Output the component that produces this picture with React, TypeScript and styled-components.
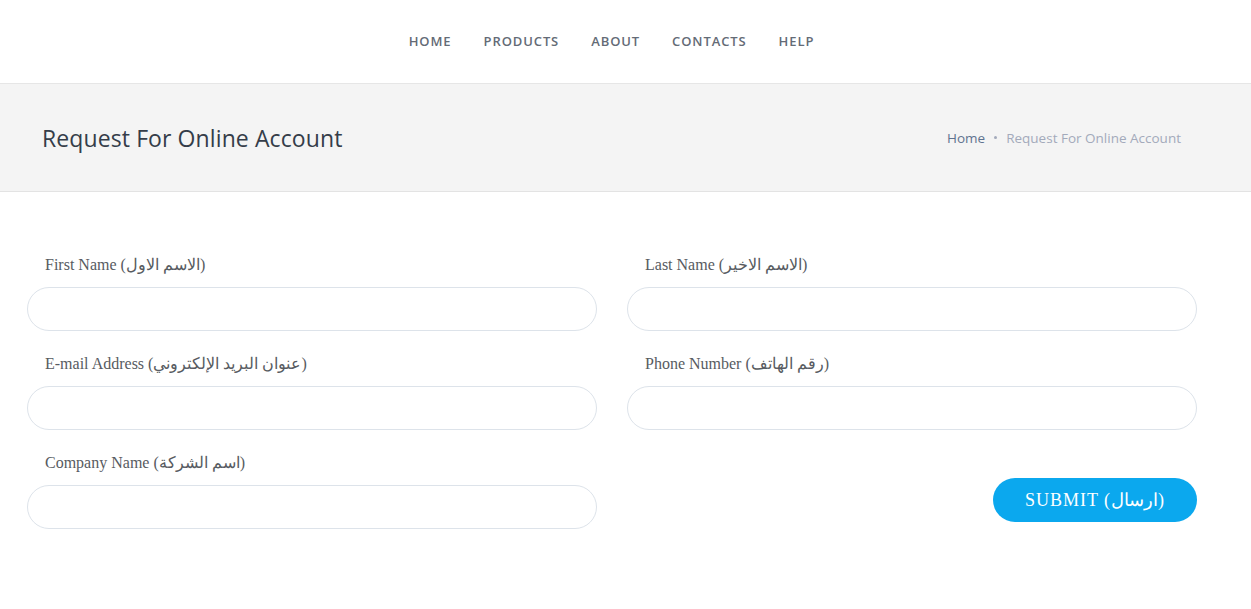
import styled, { createGlobalStyle } from "styled-components";

const GlobalStyle = createGlobalStyle`
  html, body {
    margin: 0;
    padding: 0;
    background: #fff;
  }
  * {
    box-sizing: border-box;
  }
`;

const NavBar = styled.nav`
  height: 84px;
  border-bottom: 1px solid #e6e6e6;
  display: flex;
  align-items: center;
  justify-content: center;
  padding-right: 28px;
  padding-bottom: 1px;
`;

const NavList = styled.ul`
  display: flex;
  gap: 32px;
  margin: 0;
  padding: 0;
  list-style: none;
`;

const NavItem = styled.li`
  font-family: "Open Sans", "Noto Sans", sans-serif;
  font-size: 13px;
  font-weight: 600;
  letter-spacing: 0.9px;
  color: #646b76;
  cursor: pointer;
`;

const TitleBar = styled.div`
  height: 108px;
  background: #f4f4f4;
  border-bottom: 1px solid #e3e3e3;
  display: flex;
  align-items: center;
  justify-content: space-between;
  padding: 0 70px 0 42px;
`;

const PageTitle = styled.h1`
  margin: 0;
  font-family: "Open Sans", "Noto Sans", sans-serif;
  font-size: 23px;
  font-weight: 400;
  color: #353d49;
  letter-spacing: 0.1px;
`;

const Crumbs = styled.div`
  display: flex;
  align-items: center;
  gap: 9px;
  font-family: "Open Sans", "Noto Sans", sans-serif;
  font-size: 13.5px;
`;

const Crumb = styled.span<{ $active?: boolean }>`
  color: ${(p) => (p.$active ? "#a3aabb" : "#5f7390")};
`;

const Dot = styled.span`
  width: 3px;
  height: 3px;
  border-radius: 50%;
  background: #a3aabb;
`;

const Form = styled.form`
  width: 1170px;
  margin-left: 27px;
  padding-top: 63px;
  display: grid;
  grid-template-columns: 1fr 1fr;
  column-gap: 30px;
  row-gap: 23px;
`;

const Field = styled.div`
  display: flex;
  flex-direction: column;
`;

const Label = styled.label`
  font-family: "Liberation Serif", "DejaVu Serif", serif;
  font-size: 16px;
  line-height: 20px;
  color: #575b61;
  padding-left: 18px;
  margin-bottom: 12px;
`;

const Input = styled.input`
  height: 44px;
  border: 1px solid #dde3ea;
  border-radius: 22px;
  background: #fff;
  padding: 0 20px;
  font-size: 15px;
  outline: none;
`;

const SubmitCell = styled.div`
  display: flex;
  justify-content: flex-end;
  align-items: flex-end;
  padding-bottom: 7px;
`;

const SubmitButton = styled.button`
  width: 204px;
  height: 44px;
  border: none;
  border-radius: 22px;
  background: #0ba8ee;
  color: #fff;
  font-family: "Liberation Serif", "DejaVu Serif", serif;
  font-size: 18px;
  font-weight: 400;
  letter-spacing: 1px;
  cursor: pointer;
`;

const fields = [
  { name: "first", label: "First Name (الاسم الاول)" },
  { name: "last", label: "Last Name (الاسم الاخير)" },
  { name: "email", label: "E-mail Address (عنوان البريد الإلكتروني)" },
  { name: "phone", label: "Phone Number (رقم الهاتف)" },
  { name: "company", label: "Company Name (اسم الشركة)" },
];

const menus = ["HOME", "PRODUCTS", "ABOUT", "CONTACTS", "HELP"];

export default function App() {
  return (
    <>
      <GlobalStyle />
      <NavBar>
        <NavList>
          {menus.map((m) => (
            <NavItem key={m}>{m}</NavItem>
          ))}
        </NavList>
      </NavBar>
      <TitleBar>
        <PageTitle>Request For Online Account</PageTitle>
        <Crumbs>
          <Crumb>Home</Crumb>
          <Dot />
          <Crumb $active>Request For Online Account</Crumb>
        </Crumbs>
      </TitleBar>
      <Form onSubmit={(e) => e.preventDefault()}>
        {fields.map((f) => (
          <Field key={f.name}>
            <Label htmlFor={f.name}>{f.label}</Label>
            <Input id={f.name} name={f.name} />
          </Field>
        ))}
        <SubmitCell>
          <SubmitButton type="submit">SUBMIT (ارسال)</SubmitButton>
        </SubmitCell>
      </Form>
    </>
  );
}
